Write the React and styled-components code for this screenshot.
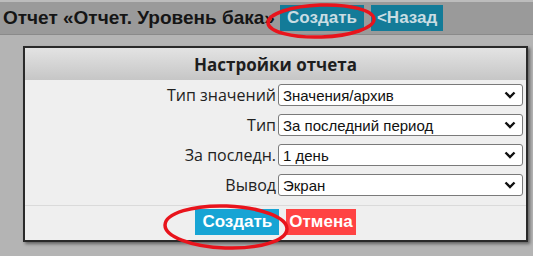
import React from "react";
import styled, { createGlobalStyle } from "styled-components";

const GlobalStyle = createGlobalStyle`
  html, body {
    margin: 0;
    padding: 0;
    background: #b4b4b4;
  }
  body {
    font-family: "Liberation Sans", Arial, sans-serif;
  }
`;

const Page = styled.div`
  position: relative;
  width: 533px;
  height: 256px;
  overflow: hidden;
  background: #b4b4b4;
`;

const TopBar = styled.div`
  display: flex;
  align-items: center;
  height: 35px;
  box-sizing: border-box;
  padding: 0 0 0 3px;
  background: #9a9a9a;
  border-top: 2px solid #bcbcbc;
  border-bottom: 1px solid #8a8a8a;
`;

const Title = styled.div`
  font-size: 19px;
  font-weight: bold;
  color: #151515;
  white-space: nowrap;
  overflow: hidden;
  width: 274px;
  margin-right: 3px;
`;

const BarButton = styled.div`
  display: flex;
  align-items: center;
  height: 26px;
  padding: 0 ${({ $pad }) => $pad}px;
  margin-right: 7px;
  background: #137b98;
  color: #c9dde3;
  font-size: 17px;
  font-weight: bold;
`;

const Overlay = styled.div`
  padding: 11px 0 0 23px;
`;

const Dialog = styled.div`
  width: 505px;
  box-sizing: border-box;
  border: 2px solid #2a2a2a;
  box-shadow: 2px 2px 3px rgba(0, 0, 0, 0.45);
  background: #efefef;
`;

const DialogHeader = styled.div`
  height: 32px;
  display: flex;
  align-items: center;
  justify-content: center;
  background: linear-gradient(#e3e3e3, #c6c6c6);
  font-family: "Open Sans", "Noto Sans", sans-serif;
  font-size: 17px;
  font-weight: bold;
  color: #1e1e1e;
`;

const Rows = styled.div`
  display: grid;
  grid-template-columns: 251px 245px;
  column-gap: 2px;
  row-gap: 8px;
  padding: 4px 0 9px;
  border-bottom: 1px solid #dadada;
`;

const Label = styled.div`
  display: flex;
  align-items: center;
  justify-content: flex-end;
  font-family: "Open Sans", "Noto Sans", sans-serif;
  font-size: 16px;
  color: #222;
`;

const SelectBox = styled.div`
  display: flex;
  align-items: center;
  justify-content: space-between;
  height: 22px;
  box-sizing: border-box;
  padding: 0 6px 0 4px;
  background: #fff;
  border: 1px solid #7a7a7a;
  border-radius: 3px;
  font-size: 15px;
  color: #111;
`;

const Footer = styled.div`
  display: flex;
  justify-content: center;
  gap: 7px;
  padding: 3px 0 5px;
`;

const Button = styled.div`
  display: flex;
  align-items: center;
  height: 26px;
  padding: 0 ${({ $pad }) => $pad}px;
  background: ${({ $bg }) => $bg};
  color: #fff;
  font-size: 17px;
  font-weight: bold;
`;

const Marks = styled.svg`
  position: absolute;
  left: 0;
  top: 0;
  pointer-events: none;
`;

const Chevron = () => (
  <svg width="12" height="8" viewBox="0 0 12 8">
    <path d="M1.5 1.5 L6 6 L10.5 1.5" fill="none" stroke="#111" strokeWidth="2.4" />
  </svg>
);

const rows = [
  ["Тип значений", "Значения/архив"],
  ["Тип", "За последний период"],
  ["За последн.", "1 день"],
  ["Вывод", "Экран"],
];

export default function App() {
  return (
    <Page>
      <GlobalStyle />
      <TopBar>
        <Title>Отчет «Отчет. Уровень бака»</Title>
        <BarButton $pad={7}>Создать</BarButton>
        <BarButton $pad={6}>&lt;Назад</BarButton>
      </TopBar>
      <Overlay>
        <Dialog>
          <DialogHeader>Настройки отчета</DialogHeader>
          <Rows>
            {rows.map(([label, value]) => (
              <React.Fragment key={label}>
                <Label>{label}</Label>
                <SelectBox>
                  <span>{value}</span>
                  <Chevron />
                </SelectBox>
              </React.Fragment>
            ))}
          </Rows>
          <Footer>
            <Button $bg="#17a4d4" $pad={7}>Создать</Button>
            <Button $bg="#ff4343" $pad={3}>Отмена</Button>
          </Footer>
        </Dialog>
      </Overlay>
      <Marks width="533" height="256">
        <ellipse cx="321" cy="21" rx="53" ry="16" fill="none" stroke="#e8141c" strokeWidth="3.5" transform="rotate(-2 321 21)" />
        <ellipse cx="226" cy="227" rx="61" ry="21" fill="none" stroke="#e8141c" strokeWidth="3.5" transform="rotate(2 226 227)" />
      </Marks>
    </Page>
  );
}
